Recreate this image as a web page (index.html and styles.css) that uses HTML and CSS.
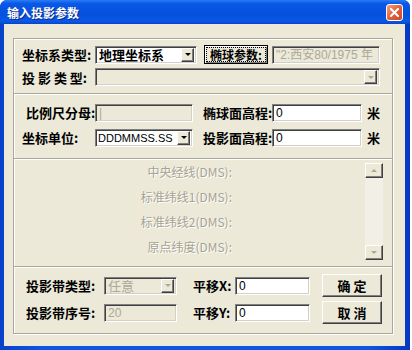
FILE: index.html
```html
<!DOCTYPE html>
<html lang="zh-CN">
<head>
  <meta charset="UTF-8" />
  <title>输入投影参数</title>
  <link rel="stylesheet" href="styles.css">
</head>
<body>
  <div class="window">
    <div class="titlebar">
      <span class="title">输入投影参数</span>
      <span class="close">
        <svg width="9" height="9" viewBox="0 0 9 9"><path d="M1 1L8 8M8 1L1 8" stroke="#fff" stroke-width="2" stroke-linecap="square"/></svg>
      </span>
    </div>

    <div class="client">
      <div class="groups">
        <section class="group g1">
          <div class="row r1">
            <span class="lbl w73">坐标系类型:</span>
            <div class="combo c-coord"><span class="val">地理坐标系</span><span class="drop"></span></div>
            <button class="btn default"><span class="focus">椭球参数:</span></button>
            <div class="field off f-ellip">"2:西安80/1975 年</div>
          </div>
          <div class="row r2">
            <span class="lbl w73">投 影 类 型:</span>
            <div class="combo off c-proj"><span class="val"></span><span class="drop"></span></div>
          </div>
        </section>

        <section class="group g2">
          <div class="row">
            <span class="lbl w73 indent">比例尺分母:</span>
            <div class="field off f-98">|</div>
            <span class="lbl w69 ml10">椭球面高程:</span>
            <div class="field f-90">0</div>
            <span class="lbl ml5">米</span>
          </div>
          <div class="row">
            <span class="lbl w73">坐标单位:</span>
            <div class="combo f-98"><span class="val latin">DDDMMSS.SS</span><span class="drop"></span></div>
            <span class="lbl w69 ml10">投影面高程:</span>
            <div class="field f-90">0</div>
            <span class="lbl ml5">米</span>
          </div>
        </section>

        <section class="group g3">
          <div class="dms">
            <span>中央经线(DMS):</span>
            <span>标准纬线1(DMS):</span>
            <span>标准纬线2(DMS):</span>
            <span>原点纬度(DMS):</span>
          </div>
          <div class="scroll">
            <span class="sbtn up"></span>
            <span class="track"></span>
            <span class="sbtn down"></span>
          </div>
        </section>

        <section class="group g4">
          <div class="row">
            <span class="lbl w82 indent">投影带类型:</span>
            <div class="combo off f-73"><span class="val">任意</span><span class="drop"></span></div>
            <span class="lbl w42 ml16">平移X:</span>
            <div class="field f-75">0</div>
            <button class="btn cmd">确 定</button>
          </div>
          <div class="row">
            <span class="lbl w82 indent">投影带序号:</span>
            <div class="field off f-73">20</div>
            <span class="lbl w42 ml16">平移Y:</span>
            <div class="field f-75">0</div>
            <button class="btn cmd">取 消</button>
          </div>
        </section>
      </div>
    </div>
  </div>
</body>
</html>
```

FILE: styles.css
```css
body {
  margin: 0;
  background: #fff;
  font-family: "Noto Sans CJK SC", "Liberation Sans", sans-serif;
}

.window {
  width: 410px;
  height: 350px;
  background: linear-gradient(90deg, #0842c8, #0b55e3 10%, #0b55e3 90%, #0638c0);
  border-radius: 7px 7px 0 0;
  display: flex;
  flex-direction: column;
}

.titlebar {
  height: 24px;
  display: flex;
  align-items: center;
  justify-content: space-between;
  padding: 0 7px 0 7px;
  background: linear-gradient(#2a7cf5, #0a58e6 15%, #0650dc 60%, #0a58e4 88%, #0744cc);
  border-radius: 7px 7px 0 0;
}

.title {
  color: #fff;
  font-size: 12px;
  font-weight: bold;
  text-shadow: 1px 1px 0 #0a2a8a;
}

.close {
  width: 15px;
  height: 15px;
  border: 1px solid #fff;
  border-radius: 3px;
  background: linear-gradient(135deg, #f4a080, #e2623c 50%, #cc4a24);
  display: flex;
  align-items: center;
  justify-content: center;
}

.client {
  flex: 1;
  margin: 0 5px 4px 4px;
  background: #ece9d8;
  padding: 14px 12px 0 9px;
}

.groups {
  border: 1px solid #aca899;
  box-shadow: 1px 1px 0 #fff, inset 1px 1px 0 #fff;
}

.group {
  box-sizing: border-box;
}

.g1 { height: 54px; padding: 6px 0 0 8px; }
.g2 { height: 65px; padding: 9px 0 0 8px; }
.g3 { height: 108px; }
.g4 { height: 67px; padding: 7px 0 0 8px; }

.g2, .g3, .g4 {
  border-top: 1px solid #aca899;
  box-shadow: inset 0 1px 0 #fff;
}

.g1, .g2, .g4 {
  display: flex;
  flex-direction: column;
  gap: 4px;
}
.g2 { gap: 6px; }

.row {
  display: flex;
  align-items: center;
  height: 19px;
}
.r2 { height: 18px; }
.g4 .row { height: 23px; }

.lbl {
  font-size: 13px;
  font-weight: bold;
  color: #000;
  white-space: nowrap;
  box-sizing: border-box;
}
.w73 { width: 73px; }
.w69 { width: 69px; }
.w82 { width: 82px; }
.w42 { width: 42px; }
.indent { padding-left: 4px; }
.ml10 { margin-left: 10px; }
.ml5 { margin-left: 5px; }
.ml16 { margin-left: 16px; }

.field, .combo {
  box-sizing: border-box;
  height: 18px;
  background: #fff;
  border: 1px solid;
  border-color: #808080 #fff #fff #808080;
  box-shadow: inset 1px 1px 0 #404040, inset -1px -1px 0 #d4d0c8;
  font-size: 13px;
  line-height: 16px;
  padding-left: 3px;
  white-space: nowrap;
  color: #000;
}
.field {
  font-family: "Liberation Sans", "Noto Sans CJK SC", sans-serif;
  font-size: 12px;
}

.off {
  background: #ece9d8;
  color: #aca899;
}

.combo {
  display: flex;
  align-items: center;
  padding: 0;
}
.combo .val {
  flex: 1;
  padding-left: 3px;
  font-weight: bold;
}
.combo.off .val { font-weight: normal; }
.combo .latin {
  font-family: "Liberation Sans", sans-serif;
  font-weight: normal;
  font-size: 11px;
  padding-left: 2px;
}

.drop {
  width: 13px;
  height: 14px;
  margin-right: 2px;
  box-sizing: border-box;
  background: #ece9d8;
  border: 1px solid;
  border-color: #fff #404040 #404040 #fff;
  box-shadow: inset -1px -1px 0 #808080;
  display: flex;
  align-items: center;
  justify-content: center;
  flex: none;
}
.drop::after {
  content: "";
  border-left: 3px solid transparent;
  border-right: 3px solid transparent;
  border-top: 3px solid #000;
}
.off .drop::after { border-top-color: #aca899; }

.c-coord { width: 102px; }
.c-proj { width: 285px; }
.f-ellip { width: 108px; margin-left: 4px; }
.f-98 { width: 98px; }
.f-90 { width: 90px; }
.f-73 { width: 73px; }
.f-75 { width: 75px; }

.btn {
  box-sizing: border-box;
  background: #ece9d8;
  border: 1px solid;
  border-color: #fff #404040 #404040 #fff;
  box-shadow: inset -1px -1px 0 #808080;
  font-family: "Noto Sans CJK SC", sans-serif;
  font-size: 13px;
  font-weight: bold;
  color: #000;
  padding: 0;
  margin: 0;
}

.btn.default {
  width: 64px;
  height: 19px;
  margin-left: 7px;
  border: 1px solid #000;
  box-shadow: inset 1px 1px 0 #fff, inset -1px -1px 0 #808080;
  font-size: 12px;
  padding: 2px;
}
.focus {
  display: block;
  height: 13px;
  line-height: 13px;
  outline: 1px dotted #000;
}

.btn.cmd {
  width: 60px;
  height: 23px;
  margin-left: 12px;
}

.g3 {
  display: flex;
}

.dms {
  width: 218px;
  display: flex;
  flex-direction: column;
  align-items: flex-end;
  font-size: 12px;
  line-height: 25px;
  color: #a6a292;
  text-shadow: 1px 1px 0 #fff;
}

.scroll {
  width: 18px;
  height: 97px;
  margin: 4px 0 0 133px;
  display: flex;
  flex-direction: column;
  background: #f2f0e6;
}
.track { flex: 1; }
.sbtn {
  height: 15px;
  box-sizing: border-box;
  background: #ece9d8;
  border: 1px solid;
  border-color: #fff #404040 #404040 #fff;
  box-shadow: inset -1px -1px 0 #808080;
  display: flex;
  align-items: center;
  justify-content: center;
}
.sbtn::after {
  content: "";
  border-left: 3px solid transparent;
  border-right: 3px solid transparent;
}
.up::after { border-bottom: 3px solid #aca899; }
.down::after { border-top: 3px solid #aca899; }
```
